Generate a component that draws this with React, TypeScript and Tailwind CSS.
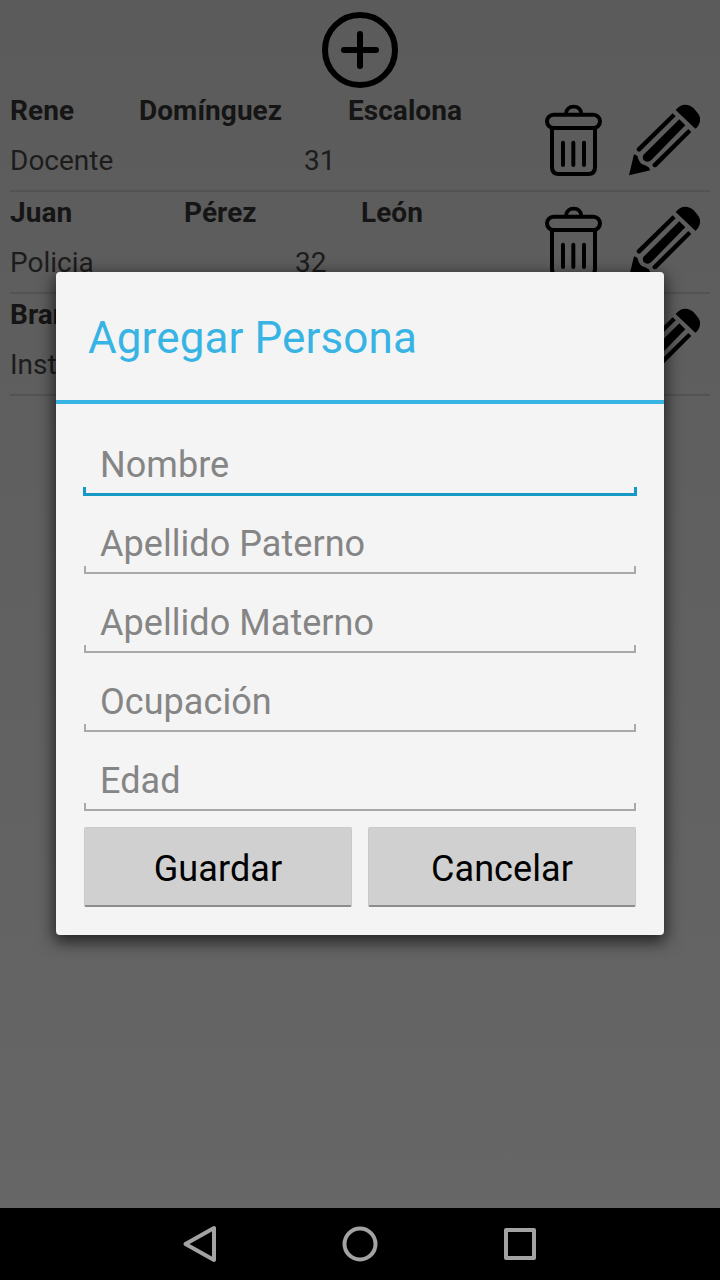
type Person = {
  first: string;
  paternal: string;
  maternal: string;
  job: string;
  age: string;
  nameCols: string;
  jobCols: string;
};

const people: Person[] = [
  { first: "Rene", paternal: "Domínguez", maternal: "Escalona", job: "Docente", age: "31", nameCols: "grid-cols-[129px_209px_1fr]", jobCols: "grid-cols-[294px_1fr]" },
  { first: "Juan", paternal: "Pérez", maternal: "León", job: "Policia", age: "32", nameCols: "grid-cols-[174px_177px_1fr]", jobCols: "grid-cols-[285px_1fr]" },
  { first: "Bran", paternal: "", maternal: "", job: "Inst", age: "", nameCols: "grid-cols-[174px_177px_1fr]", jobCols: "grid-cols-[285px_1fr]" },
];

const fields = ["Nombre", "Apellido Paterno", "Apellido Materno", "Ocupación", "Edad"];

function AddIcon() {
  return (
    <svg className="h-20 w-20" viewBox="0 0 80 80" fill="none" stroke="#000" strokeWidth="6" strokeLinecap="round">
      <circle cx="40" cy="40" r="35" />
      <path d="M40 24v32M24 40h32" />
    </svg>
  );
}

function TrashIcon() {
  return (
    <svg className="h-[72px] w-[60px]" viewBox="42 42 180 216" fill="none" stroke="#000" strokeWidth="12" strokeLinecap="round">
      <path d="M108 71C110 56 118 50 131 50S152 56 154 71" strokeWidth="11" />
      <rect x="51" y="74" width="159" height="40" rx="20" />
      <path d="M66 115V232Q66 252 86 252H175Q195 252 195 232V115" />
      <path d="M99 158V225M130 158V225M162 158V225" />
    </svg>
  );
}

function PencilIcon() {
  return (
    <svg className="h-[72px] w-[72px]" viewBox="24 27 216 216" fill="#000">
      <path d="M167 45Q180 29 196 29Q210 29 221 40L233 54Q242 65 240 77Q238 92 226 101Z" />
      <path d="M158 55L167 64L61 169Q54 172 50 165Q49 161 52 158Z" />
      <path d="M178 73L196 91L94 195Q85 203 75 198Q65 192 70 180Z" />
      <path d="M205 102L214 111L109 216Q102 219 98 213Q96 209 99 206Z" />
      <path d="M27 241L42 178L52 182Q57 202 67 208Q77 211 86 217L91 226Z" />
    </svg>
  );
}

function PersonRow({ person }: { person: Person }) {
  return (
    <li className="flex h-[102px] border-b-2 border-[#535353]">
      <div className="-mt-1 w-[534px] text-[28px] leading-[50px]">
        <div className={`grid font-bold tracking-[0.05px] text-[#151515] ${person.nameCols}`}>
          <span>{person.first}</span>
          <span>{person.paternal}</span>
          <span>{person.maternal}</span>
        </div>
        <div className={`grid text-[#1c1c1c] ${person.jobCols}`}>
          <span>{person.job}</span>
          <span>{person.age}</span>
        </div>
      </div>
      <div className="flex gap-6 pt-[14px]">
        <TrashIcon />
        <PencilIcon />
      </div>
    </li>
  );
}

function Field({ label, active }: { label: string; active: boolean }) {
  return (
    <div className="flex h-[79px] flex-col">
      <span className="h-[55px] pl-4 text-[36px] leading-[66px] tracking-[0.05px] text-[#858585]">{label}</span>
      {active ? (
        <span className="-mx-px h-[9px] border-x-[3px] border-b-[3px] border-[#1799c5]" />
      ) : (
        <span className="h-2 border-x-2 border-b-2 border-[#a9a9a9]" />
      )}
    </div>
  );
}

function DialogButton({ label }: { label: string }) {
  return (
    <button className="h-20 flex-1 rounded-[2px] border border-b-2 border-[#cacaca] border-b-[#8c8c8c] bg-[#d0d0d0] pt-1 text-[36px] leading-none tracking-[0.08px] text-black">
      {label}
    </button>
  );
}

export default function App() {
  return (
    <div className="relative flex h-[1280px] w-[720px] flex-col overflow-hidden bg-black font-['Roboto',sans-serif]">
      <main className="flex-1 bg-linear-to-b from-[#5b5b5b] to-[#666666] px-[10px] pt-[10px]">
        <div className="flex h-20 justify-center">
          <AddIcon />
        </div>
        <ul>
          {people.map((p) => (
            <PersonRow key={p.first} person={p} />
          ))}
        </ul>
      </main>

      <nav className="flex h-[72px] items-center justify-center gap-[112px] bg-black">
        <svg className="size-12" viewBox="0 0 48 48" fill="none" stroke="#a3a3a3" strokeWidth="4" strokeLinejoin="round">
          <path d="M38 8V40L9.500 24Z" />
        </svg>
        <svg className="size-12" viewBox="0 0 48 48" fill="none" stroke="#a3a3a3" strokeWidth="4">
          <circle cx="24" cy="24" r="15.500" />
        </svg>
        <svg className="size-12" viewBox="0 0 48 48" fill="none" stroke="#a3a3a3" strokeWidth="4" strokeLinejoin="round">
          <rect x="10" y="10" width="28" height="28" />
        </svg>
      </nav>

      <section
        role="dialog"
        className="absolute left-[56px] top-[272px] flex h-[663px] w-[608px] flex-col rounded-[4px] bg-[#f4f4f4] shadow-[0_5px_16px_2px_rgba(0,0,0,0.65)]"
      >
        <h1 className="h-[132px] border-b-4 border-[#38b4e4] pl-8 text-[44px] leading-[133px] tracking-[0.1px] text-[#38b4e4]">
          Agregar Persona
        </h1>
        <div className="px-7 pt-[28px]">
          {fields.map((label, i) => (
            <Field key={label} label={label} active={i === 0} />
          ))}
          <div className="flex gap-4">
            <DialogButton label="Guardar" />
            <DialogButton label="Cancelar" />
          </div>
        </div>
      </section>
    </div>
  );
}
